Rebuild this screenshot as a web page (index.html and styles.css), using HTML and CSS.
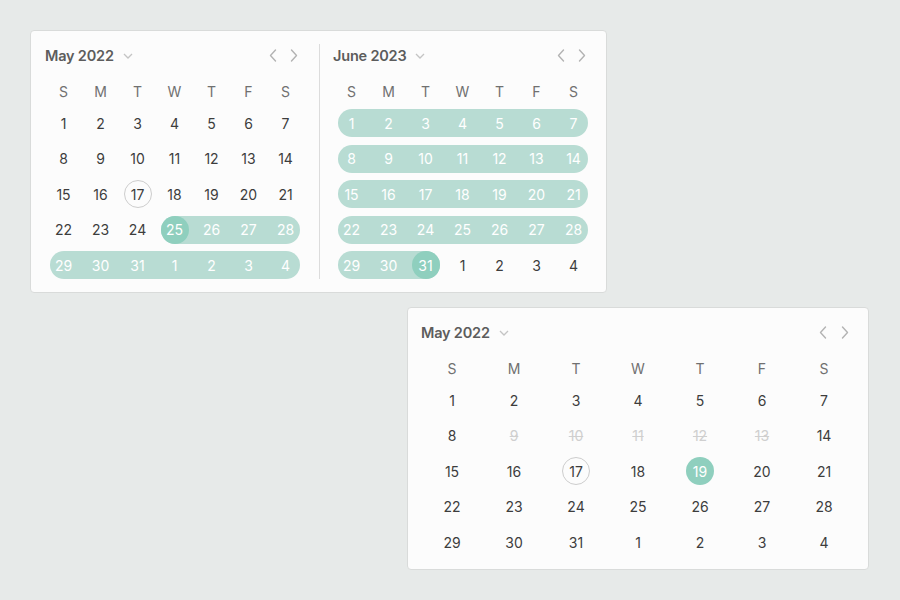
FILE: index.html
```html
<!DOCTYPE html>
<html>
<head>
<meta charset="utf-8">
<link rel="stylesheet" href="styles.css">
</head>
<body>
<div class="stage">
  <div class="card card-double">
    <div class="cal cal-narrow">
      <div class="head">
        <div class="title">May 2022</div>
        <svg class="caret" width="10" height="6" viewBox="0 0 10 6"><path d="M1 1 L5 5 L9 1" /></svg>
        <div class="nav">
          <button class="nav-btn"><svg width="8" height="13" viewBox="0 0 8 13"><path d="M6.5 1 L1.5 6.5 L6.5 12"/></svg></button>
          <button class="nav-btn"><svg width="8" height="13" viewBox="0 0 8 13"><path d="M1.5 1 L6.5 6.5 L1.5 12"/></svg></button>
        </div>
      </div>
      <div class="weekdays"><div>S</div><div>M</div><div>T</div><div>W</div><div>T</div><div>F</div><div>S</div></div>
      <div class="days">
        <div class="cell"><span>1</span></div><div class="cell"><span>2</span></div><div class="cell"><span>3</span></div><div class="cell"><span>4</span></div><div class="cell"><span>5</span></div><div class="cell"><span>6</span></div><div class="cell"><span>7</span></div>
        <div class="cell"><span>8</span></div><div class="cell"><span>9</span></div><div class="cell"><span>10</span></div><div class="cell"><span>11</span></div><div class="cell"><span>12</span></div><div class="cell"><span>13</span></div><div class="cell"><span>14</span></div>
        <div class="cell"><span>15</span></div><div class="cell"><span>16</span></div><div class="cell today"><span>17</span></div><div class="cell"><span>18</span></div><div class="cell"><span>19</span></div><div class="cell"><span>20</span></div><div class="cell"><span>21</span></div>
        <div class="cell"><span>22</span></div><div class="cell"><span>23</span></div><div class="cell"><span>24</span></div><div class="cell range rs endpoint"><span>25</span></div><div class="cell range"><span>26</span></div><div class="cell range"><span>27</span></div><div class="cell range re"><span>28</span></div>
        <div class="cell range rs"><span>29</span></div><div class="cell range"><span>30</span></div><div class="cell range"><span>31</span></div><div class="cell range"><span>1</span></div><div class="cell range"><span>2</span></div><div class="cell range"><span>3</span></div><div class="cell range re"><span>4</span></div>
      </div>
    </div>
    <div class="divider"></div>
    <div class="cal cal-narrow">
      <div class="head">
        <div class="title">June 2023</div>
        <svg class="caret" width="10" height="6" viewBox="0 0 10 6"><path d="M1 1 L5 5 L9 1" /></svg>
        <div class="nav">
          <button class="nav-btn"><svg width="8" height="13" viewBox="0 0 8 13"><path d="M6.5 1 L1.5 6.5 L6.5 12"/></svg></button>
          <button class="nav-btn"><svg width="8" height="13" viewBox="0 0 8 13"><path d="M1.5 1 L6.5 6.5 L1.5 12"/></svg></button>
        </div>
      </div>
      <div class="weekdays"><div>S</div><div>M</div><div>T</div><div>W</div><div>T</div><div>F</div><div>S</div></div>
      <div class="days">
        <div class="cell range rs"><span>1</span></div><div class="cell range"><span>2</span></div><div class="cell range"><span>3</span></div><div class="cell range"><span>4</span></div><div class="cell range"><span>5</span></div><div class="cell range"><span>6</span></div><div class="cell range re"><span>7</span></div>
        <div class="cell range rs"><span>8</span></div><div class="cell range"><span>9</span></div><div class="cell range"><span>10</span></div><div class="cell range"><span>11</span></div><div class="cell range"><span>12</span></div><div class="cell range"><span>13</span></div><div class="cell range re"><span>14</span></div>
        <div class="cell range rs"><span>15</span></div><div class="cell range"><span>16</span></div><div class="cell range"><span>17</span></div><div class="cell range"><span>18</span></div><div class="cell range"><span>19</span></div><div class="cell range"><span>20</span></div><div class="cell range re"><span>21</span></div>
        <div class="cell range rs"><span>22</span></div><div class="cell range"><span>23</span></div><div class="cell range"><span>24</span></div><div class="cell range"><span>25</span></div><div class="cell range"><span>26</span></div><div class="cell range"><span>27</span></div><div class="cell range re"><span>28</span></div>
        <div class="cell range rs"><span>29</span></div><div class="cell range"><span>30</span></div><div class="cell range re endpoint"><span>31</span></div><div class="cell"><span>1</span></div><div class="cell"><span>2</span></div><div class="cell"><span>3</span></div><div class="cell"><span>4</span></div>
      </div>
    </div>
  </div>

  <div class="card card-single">
    <div class="cal cal-wide">
      <div class="head">
        <div class="title">May 2022</div>
        <svg class="caret" width="10" height="6" viewBox="0 0 10 6"><path d="M1 1 L5 5 L9 1" /></svg>
        <div class="nav nav-wide">
          <button class="nav-btn"><svg width="8" height="13" viewBox="0 0 8 13"><path d="M6.5 1 L1.5 6.5 L6.5 12"/></svg></button>
          <button class="nav-btn"><svg width="8" height="13" viewBox="0 0 8 13"><path d="M1.5 1 L6.5 6.5 L1.5 12"/></svg></button>
        </div>
      </div>
      <div class="weekdays"><div>S</div><div>M</div><div>T</div><div>W</div><div>T</div><div>F</div><div>S</div></div>
      <div class="days">
        <div class="cell"><span>1</span></div><div class="cell"><span>2</span></div><div class="cell"><span>3</span></div><div class="cell"><span>4</span></div><div class="cell"><span>5</span></div><div class="cell"><span>6</span></div><div class="cell"><span>7</span></div>
        <div class="cell"><span>8</span></div><div class="cell disabled"><span>9</span></div><div class="cell disabled"><span>10</span></div><div class="cell disabled"><span>11</span></div><div class="cell disabled"><span>12</span></div><div class="cell disabled"><span>13</span></div><div class="cell"><span>14</span></div>
        <div class="cell"><span>15</span></div><div class="cell"><span>16</span></div><div class="cell today"><span>17</span></div><div class="cell"><span>18</span></div><div class="cell selected"><span>19</span></div><div class="cell"><span>20</span></div><div class="cell"><span>21</span></div>
        <div class="cell"><span>22</span></div><div class="cell"><span>23</span></div><div class="cell"><span>24</span></div><div class="cell"><span>25</span></div><div class="cell"><span>26</span></div><div class="cell"><span>27</span></div><div class="cell"><span>28</span></div>
        <div class="cell"><span>29</span></div><div class="cell"><span>30</span></div><div class="cell"><span>31</span></div><div class="cell"><span>1</span></div><div class="cell"><span>2</span></div><div class="cell"><span>3</span></div><div class="cell"><span>4</span></div>
      </div>
    </div>
  </div>
</div>
</body>
</html>
```
FILE: styles.css
```css
* { box-sizing: border-box; }
html, body { margin: 0; padding: 0; }
body {
  width: 900px;
  height: 600px;
  background: #e7eae9;
  font-family: Inter, "Noto Sans", sans-serif;
  color: #3d3d3d;
  overflow: hidden;
}
.stage {
  padding: 30px 0 0 30px;
  display: flex;
  flex-direction: column;
  align-items: flex-start;
}
.card {
  background: #fcfcfc;
  border: 1px solid #d9dbda;
  border-radius: 4px;
}
.card-double {
  display: flex;
  padding: 13px 14px 13px 14px;
}
.card-single {
  margin-top: 14px;
  margin-left: 377px;
  padding: 13px 13px 13px 13px;
}
.divider {
  width: 1px;
  background: #dcdcdc;
  margin: 0 13px 0 15px;
}
.head {
  height: 22px;
  display: flex;
  align-items: center;
  margin-bottom: 11px;
}
.title {
  font-size: 14.5px;
  font-weight: 600;
  color: #5c5c5c;
  letter-spacing: -0.2px;
}
.caret {
  margin-left: 9px;
  margin-top: 1px;
}
.caret path {
  fill: none;
  stroke: #c4c4c4;
  stroke-width: 1.3;
}
.nav {
  margin-left: auto;
  display: flex;
  gap: 1px;
}
.nav-wide { gap: 2px; }
.nav-btn {
  width: 20px;
  height: 22px;
  padding: 0;
  border: 0;
  background: transparent;
  display: flex;
  align-items: center;
  justify-content: center;
}
.nav-btn path {
  fill: none;
  stroke: #b3b3b3;
  stroke-width: 1.4;
  stroke-linecap: round;
  stroke-linejoin: round;
}
.weekdays, .days {
  display: grid;
}
.cal-narrow .weekdays, .cal-narrow .days { grid-template-columns: repeat(7, 37px); }
.cal-wide .weekdays, .cal-wide .days { grid-template-columns: repeat(7, 62px); }
.weekdays {
  height: 28px;
  margin-bottom: 4px;
}
.weekdays div {
  display: flex;
  align-items: center;
  justify-content: center;
  font-size: 14px;
  color: #707070;
}
.days {
  grid-auto-rows: 28px;
  row-gap: 7.5px;
}
.cell {
  position: relative;
  display: flex;
  align-items: center;
  justify-content: center;
  font-size: 14px;
  color: #3d3d3d;
}
.cell span {
  position: relative;
  z-index: 1;
  width: 28px;
  height: 28px;
  border-radius: 50%;
  display: flex;
  align-items: center;
  justify-content: center;
}
.range { color: #ffffff; }
.range::before {
  content: "";
  position: absolute;
  top: 0;
  bottom: 0;
  left: 0;
  right: 0;
  background: #b8dcd3;
}
.range.rs::before {
  left: 4.5px;
  border-top-left-radius: 14px;
  border-bottom-left-radius: 14px;
}
.range.re::before {
  right: 4.5px;
  border-top-right-radius: 14px;
  border-bottom-right-radius: 14px;
}
.endpoint span, .selected span {
  background: #8fcfbe;
  color: #ffffff;
}
.today span {
  border: 1px solid #cdcdcd;
}
.disabled {
  color: #cfcfcf;
  text-decoration: line-through;
}
```
